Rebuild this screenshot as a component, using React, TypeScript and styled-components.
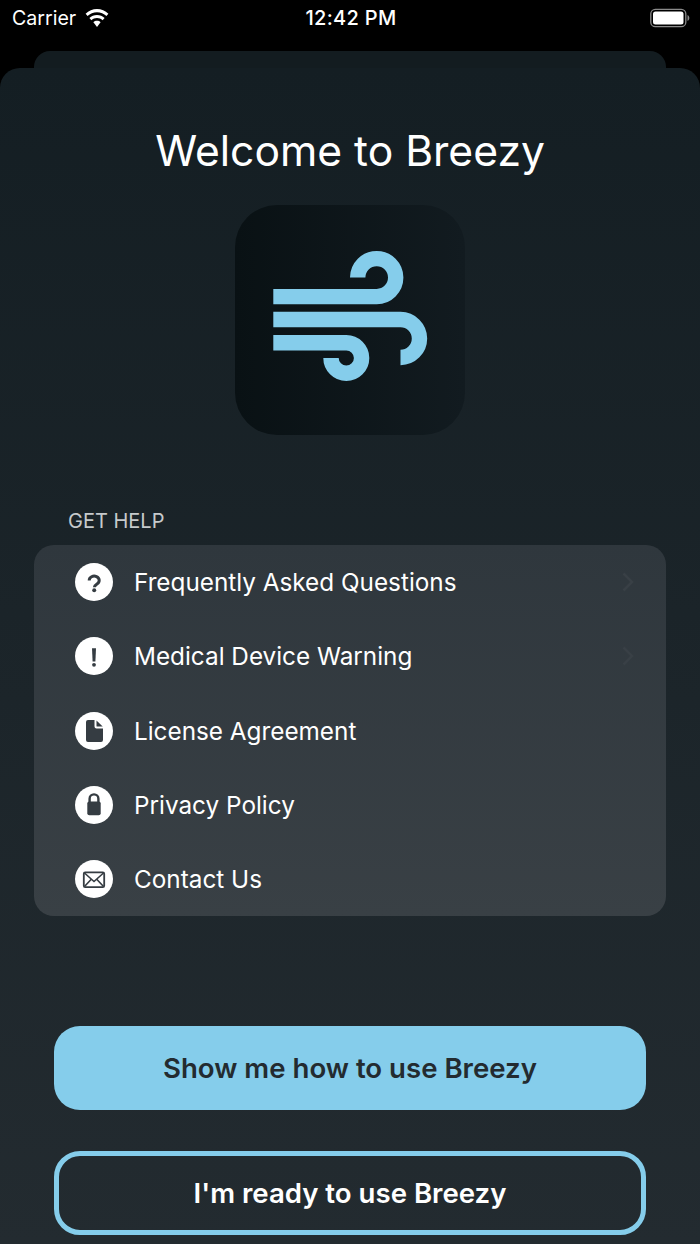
import React from "react";
import styled, { createGlobalStyle } from "styled-components";

const GlobalStyle = createGlobalStyle`
  html, body {
    margin: 0;
    padding: 0;
    background: #000;
    font-family: "Inter", "Liberation Sans", sans-serif;
    overflow: hidden;
  }
`;

const Screen = styled.div`
  width: 700px;
  height: 1244px;
  display: flex;
  flex-direction: column;
  background: #000;
`;

const StatusBar = styled.div`
  height: 51px;
  flex: none;
  padding: 0 10px 15px 12px;
  box-sizing: border-box;
  display: grid;
  grid-template-columns: 1fr auto 1fr;
  align-items: center;
  color: #fff;
  font-size: 19.6px;
`;

const Carrier = styled.div`
  display: flex;
  align-items: center;
  gap: 8px;
`;

const Clock = styled.div`
  font-weight: 500;
  font-size: 20px;
  letter-spacing: 0.3px;
`;

const Battery = styled.svg`
  justify-self: end;
`;

const BackSheet = styled.div`
  flex: none;
  height: 17px;
  margin: 0 34px;
  background: #131c20;
  border-radius: 16px 16px 0 0;
`;

const Sheet = styled.div`
  flex: 1;
  display: flex;
  flex-direction: column;
  background: linear-gradient(180deg, #141e23 0%, #232b30 100%);
  border-radius: 20px 20px 0 0;
`;

const Title = styled.h1`
  margin: 54px 0 0;
  height: 58px;
  font-size: 42.6px;
  line-height: 58px;
  font-weight: 400;
  color: #fff;
  text-align: center;
`;

const Logo = styled.div`
  width: 230px;
  height: 230px;
  margin: 25px auto 0;
  border-radius: 42px;
  background: linear-gradient(90deg, #091114 0%, #121b20 100%);
`;

const SectionLabel = styled.div`
  margin: 73px 0 0 68px;
  height: 26px;
  font-size: 20px;
  line-height: 26px;
  color: #c6cacc;
  text-transform: uppercase;
`;

const Card = styled.div`
  margin: 11px 34px 0;
  height: 371px;
  display: flex;
  flex-direction: column;
  border-radius: 20px;
  background: linear-gradient(180deg, #2f373d 0%, #394045 100%);
`;

const Row = styled.div`
  flex: 1;
  display: flex;
  align-items: center;
  padding: 0 32px 0 41px;
  gap: 21px;
`;

const RowIcon = styled.svg`
  flex: none;
  width: 38px;
  height: 38px;
`;

const RowLabel = styled.div`
  flex: 1;
  font-size: 24.3px;
  color: #fff;
`;

const Buttons = styled.div`
  margin: 110px 54px 0;
  display: flex;
  flex-direction: column;
  gap: 41px;
`;

const Button = styled.div<{ $primary?: boolean }>`
  height: 84px;
  box-sizing: border-box;
  display: flex;
  align-items: center;
  justify-content: center;
  border-radius: 26px;
  font-size: 27.6px;
  font-weight: 600;
  color: ${(p) => (p.$primary ? "#232b30" : "#fff")};
  background: ${(p) => (p.$primary ? "#85cdeb" : "transparent")};
  border: ${(p) => (p.$primary ? "none" : "5px solid #85cdeb")};
`;

const INK = "#353c42";

const helpItems = [
  {
    label: "Frequently Asked Questions",
    chevron: true,
    glyph: (
      <>
        <path d="M14.200 17.500a5 4.300 0 1 1 7.800 3.500c-1.700 1.100-2.600 1.800-2.600 3.300" fill="none" stroke={INK} strokeWidth="3" />
        <circle cx="19.200" cy="27.300" r="2" fill={INK} />
      </>
    ),
  },
  {
    label: "Medical Device Warning",
    chevron: true,
    glyph: (
      <>
        <path d="M17 11.300h4l-.6 13.200h-2.800z" fill={INK} />
        <circle cx="19" cy="27.800" r="1.900" fill={INK} />
      </>
    ),
  },
  {
    label: "License Agreement",
    glyph: (
      <>
        <path d="M13 8h6.500v6.400a2 2 0 0 0 2 2H28V28a2 2 0 0 1-2 2H13a2 2 0 0 1-2-2V10a2 2 0 0 1 2-2z" fill={INK} />
        <path d="M21.500 8.400 27.700 14.600H22a.5.5 0 0 1-.5-.5z" fill={INK} />
      </>
    ),
  },
  {
    label: "Privacy Policy",
    glyph: (
      <>
        <path d="M14.600 16v-3.200a4.400 4.400 0 0 1 8.800 0V16" fill="none" stroke={INK} strokeWidth="2.400" />
        <rect x="12.300" y="15.600" width="13.400" height="13.600" rx="2" fill={INK} />
      </>
    ),
  },
  {
    label: "Contact Us",
    glyph: (
      <>
        <rect x="8.800" y="12.300" width="20.400" height="14.800" rx="1.400" fill="none" stroke={INK} strokeWidth="1.800" />
        <path d="M9.500 13 19 21.500 28.500 13M9.500 26.500l7-7.500M28.500 26.500l-7-7.500" fill="none" stroke={INK} strokeWidth="1.600" />
      </>
    ),
  },
];

export default function App() {
  return (
    <Screen>
      <GlobalStyle />
      <StatusBar>
        <Carrier>
          Carrier
          <svg width="26" height="19" viewBox="0 0 26 19">
            <path
              d="M13 3.200c3.600 0 6.900 1.400 9.400 3.700l2-2.200C21.300 1.900 17.300 0 13 0S4.700 1.900 1.600 4.700l2 2.200C6.100 4.600 9.400 3.200 13 3.200z"
              fill="#fff"
            />
            <path
              d="M13 9c2.100 0 4.100.8 5.600 2.200l2-2.200C18.600 7.100 15.900 6 13 6S7.400 7.100 5.400 9l2 2.200C8.900 9.800 10.900 9 13 9z"
              fill="#fff"
            />
            <path d="M13 11.800c-1.400 0-2.600.5-3.600 1.400L13 18l3.600-4.800c-1-.9-2.200-1.400-3.600-1.400z" fill="#fff" />
          </svg>
        </Carrier>
        <Clock>12:42 PM</Clock>
        <Battery width="40" height="20" viewBox="0 0 40 20">
          <rect x="0.8" y="1.300" width="35" height="17.400" rx="4.500" fill="none" stroke="#8a8a8a" strokeWidth="1.300" />
          <rect x="3" y="3.500" width="30.500" height="13" rx="2.500" fill="#fff" />
          <path d="M37.500 7v6c1-.3 1.800-1.500 1.800-3s-.8-2.700-1.800-3z" fill="#8a8a8a" />
        </Battery>
      </StatusBar>
      <BackSheet />
      <Sheet>
        <Title>Welcome to Breezy</Title>
        <Logo>
          <svg width="230" height="230" viewBox="10 10 230 230" fill="none" stroke="#85cdeb" strokeWidth="15.400">
            <path d="M48.300 101.600H151.700A19 19 0 1 0 132.700 82.600" />
            <path d="M48.300 124.500H175.500A19 19 0 0 1 175.500 162.500" />
            <path d="M48.300 147.700H121.300A15.300 15.300 0 1 1 106 163" />
          </svg>
        </Logo>
        <SectionLabel>Get Help</SectionLabel>
        <Card>
          {helpItems.map((item) => (
            <Row key={item.label}>
              <RowIcon viewBox="0 0 38 38">
                <circle cx="19" cy="19" r="19" fill="#fff" />
                {item.glyph}
              </RowIcon>
              <RowLabel>{item.label}</RowLabel>
              {item.chevron && (
                <svg width="12" height="20" viewBox="0 0 12 20">
                  <path d="M1.500 1.500 10 10l-8.500 8.500" fill="none" stroke="#394046" strokeWidth="2.500" />
                </svg>
              )}
            </Row>
          ))}
        </Card>
        <Buttons>
          <Button $primary>Show me how to use Breezy</Button>
          <Button>I'm ready to use Breezy</Button>
        </Buttons>
      </Sheet>
    </Screen>
  );
}
